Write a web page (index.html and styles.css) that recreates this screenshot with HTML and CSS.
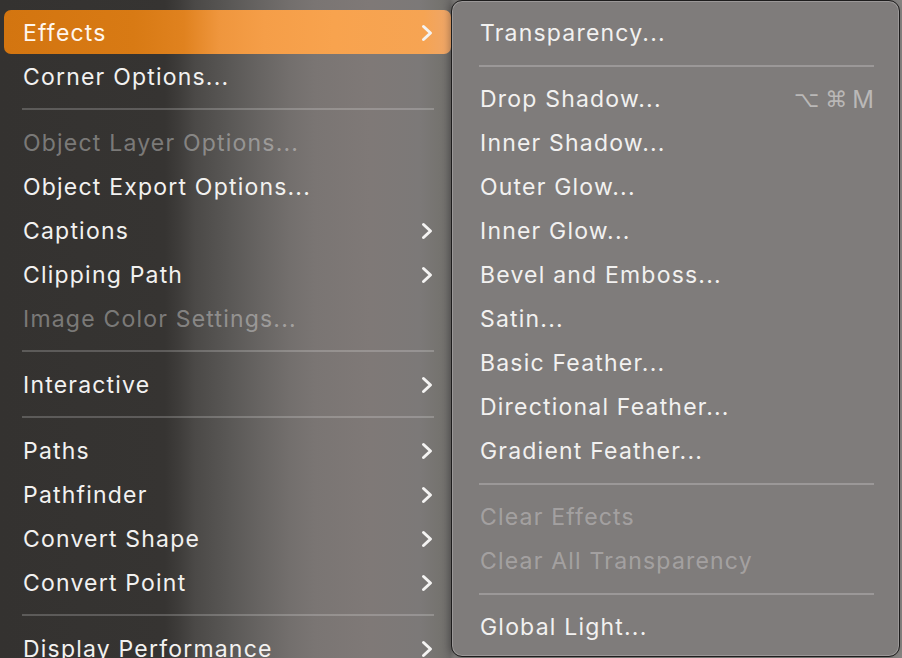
FILE: index.html
```html
<!DOCTYPE html>
<html lang="en">
<head>
<meta charset="utf-8">
<title>Effects menu</title>
<link rel="stylesheet" href="styles.css">
</head>
<body>
<div class="desk">
  <div class="menu main">
    <div class="item active"><span>Effects</span><svg class="chev" viewBox="0 0 12 18"><path d="M2.5 2.5 L9.5 9 L2.5 15.5"/></svg></div>
    <div class="item"><span>Corner Options...</span></div>
    <div class="sep"></div>
    <div class="item dis"><span>Object Layer Options...</span></div>
    <div class="item"><span>Object Export Options...</span></div>
    <div class="item"><span>Captions</span><svg class="chev" viewBox="0 0 12 18"><path d="M2.5 2.5 L9.5 9 L2.5 15.5"/></svg></div>
    <div class="item"><span>Clipping Path</span><svg class="chev" viewBox="0 0 12 18"><path d="M2.5 2.5 L9.5 9 L2.5 15.5"/></svg></div>
    <div class="item dis"><span>Image Color Settings...</span></div>
    <div class="sep"></div>
    <div class="item"><span>Interactive</span><svg class="chev" viewBox="0 0 12 18"><path d="M2.5 2.5 L9.5 9 L2.5 15.5"/></svg></div>
    <div class="sep"></div>
    <div class="item"><span>Paths</span><svg class="chev" viewBox="0 0 12 18"><path d="M2.5 2.5 L9.5 9 L2.5 15.5"/></svg></div>
    <div class="item"><span>Pathfinder</span><svg class="chev" viewBox="0 0 12 18"><path d="M2.5 2.5 L9.5 9 L2.5 15.5"/></svg></div>
    <div class="item"><span>Convert Shape</span><svg class="chev" viewBox="0 0 12 18"><path d="M2.5 2.5 L9.5 9 L2.5 15.5"/></svg></div>
    <div class="item"><span>Convert Point</span><svg class="chev" viewBox="0 0 12 18"><path d="M2.5 2.5 L9.5 9 L2.5 15.5"/></svg></div>
    <div class="sep"></div>
    <div class="item"><span>Display Performance</span><svg class="chev" viewBox="0 0 12 18"><path d="M2.5 2.5 L9.5 9 L2.5 15.5"/></svg></div>
  </div>
  <div class="menu sub">
    <div class="item"><span>Transparency...</span></div>
    <div class="sep"></div>
    <div class="item"><span>Drop Shadow...</span><span class="keys"><span class="k opt">⌥</span><span class="k cmd">⌘</span><span class="k m">M</span></span></div>
    <div class="item"><span>Inner Shadow...</span></div>
    <div class="item"><span>Outer Glow...</span></div>
    <div class="item"><span>Inner Glow...</span></div>
    <div class="item"><span>Bevel and Emboss...</span></div>
    <div class="item"><span>Satin...</span></div>
    <div class="item"><span>Basic Feather...</span></div>
    <div class="item"><span>Directional Feather...</span></div>
    <div class="item"><span>Gradient Feather...</span></div>
    <div class="sep"></div>
    <div class="item dis"><span>Clear Effects</span></div>
    <div class="item dis"><span>Clear All Transparency</span></div>
    <div class="sep"></div>
    <div class="item"><span>Global Light...</span></div>
  </div>
</div>
</body>
</html>
```
FILE: styles.css
```css
html, body {
  margin: 0;
  padding: 0;
  height: 100%;
  overflow: hidden;
}
body {
  font-family: Inter, "Noto Sans", "Liberation Sans", sans-serif;
  font-size: 23px;
  color: #f2f1f0;
  background: linear-gradient(90deg,
    #343230 0px, #363432 165px, #3f3d3b 180px, #4b4947 195px,
    #5a5856 230px, #686563 262px, #736f6d 290px, #7a7573 315px,
    #7f7977 370px, #7c7978 420px, #75736f 440px, #6d6b69 450px,
    #868482 455px, #868482 100%);
}
.desk {
  display: flex;
  align-items: flex-start;
  width: 902px;
  height: 658px;
}
.menu {
  display: flex;
  flex-direction: column;
}
.main {
  width: 447px;
  flex: none;
  padding: 10px 0 0 4px;
}
.item {
  box-sizing: border-box;
  display: flex;
  align-items: center;
  justify-content: space-between;
  height: 44px;
  flex: none;
  padding: 1px 19px 0;
  white-space: nowrap;
}
.item > span:first-child {
  letter-spacing: 1.2px;
}
.item.dis {
  color: rgba(255, 255, 255, 0.36);
}
.item.active {
  border-radius: 7px;
  color: #fff6ee;
  background: linear-gradient(90deg,
    #d37510 0px, #d87a14 130px, #e0821f 180px, #ef963d 215px,
    #f59e48 260px, #f8a34e 330px, #f6a453 420px, #eda66a 447px);
}
.chev {
  width: 12px;
  height: 18px;
  margin-right: -1px;
}
.chev path {
  fill: none;
  stroke: #f4f3f2;
  stroke-width: 3;
  stroke-linecap: round;
  stroke-linejoin: round;
}
.main .sep {
  height: 2px;
  margin: 10px 17px 10px 18px;
  background: rgba(255, 255, 255, 0.2);
}
.sub {
  flex: none;
  box-sizing: border-box;
  width: 449px;
  height: 657px;
  padding: 10px 7px 0 9px;
  background: #7f7c7b;
  border: 1px solid #1e1d1d;
  border-radius: 11px;
  box-shadow: inset 0 0 0 1px rgba(255, 255, 255, 0.22), -2px 0 6px rgba(0, 0, 0, 0.25);
}
.sub .item {
  padding: 0 18px 0 19px;
}
.sub .item.dis {
  color: rgba(255, 255, 255, 0.3);
}
.sub .sep {
  height: 2px;
  margin: 10px 18px 10px 18px;
  background: rgba(255, 255, 255, 0.22);
}
.keys {
  display: flex;
  align-items: center;
  color: #bab8b7;
  font-family: "DejaVu Sans", sans-serif;
  font-size: 22px;
}
.k.opt {
  margin-right: 6px;
}
.k.cmd {
  margin-right: 5px;
}
.k.m {
  font-family: Inter, "Noto Sans", sans-serif;
  font-size: 24px;
}
```
